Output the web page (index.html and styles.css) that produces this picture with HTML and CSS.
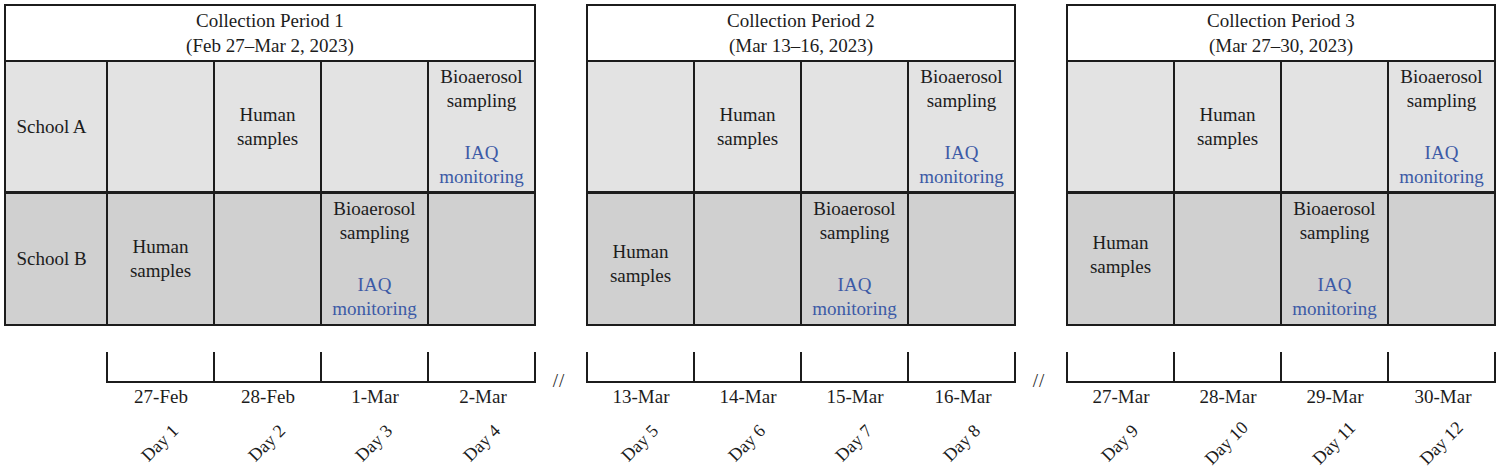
FILE: index.html
```html
<!DOCTYPE html>
<html lang="en">
<head>
<meta charset="utf-8">
<title>Sampling schedule</title>
<link rel="stylesheet" href="styles.css">
</head>
<body>
<div class="chart">
  <div class="tables">
    <div class="period p1">
      <div class="head">Collection Period 1<br>(Feb 27–Mar 2, 2023)</div>
      <div class="cell a label">School A</div>
      <div class="cell a"></div>
      <div class="cell a"><span>Human<br>samples</span></div>
      <div class="cell a"></div>
      <div class="cell a"><span>Bioaerosol<br>sampling</span><span class="iaq">IAQ<br>monitoring</span></div>
      <div class="cell b label">School B</div>
      <div class="cell b"><span>Human<br>samples</span></div>
      <div class="cell b"></div>
      <div class="cell b"><span>Bioaerosol<br>sampling</span><span class="iaq">IAQ<br>monitoring</span></div>
      <div class="cell b"></div>
    </div>
    <div class="period p2">
      <div class="head">Collection Period 2<br>(Mar 13–16, 2023)</div>
      <div class="cell a"></div>
      <div class="cell a"><span>Human<br>samples</span></div>
      <div class="cell a"></div>
      <div class="cell a"><span>Bioaerosol<br>sampling</span><span class="iaq">IAQ<br>monitoring</span></div>
      <div class="cell b low"><span>Human<br>samples</span></div>
      <div class="cell b"></div>
      <div class="cell b"><span>Bioaerosol<br>sampling</span><span class="iaq">IAQ<br>monitoring</span></div>
      <div class="cell b"></div>
    </div>
    <div class="period p3">
      <div class="head">Collection Period 3<br>(Mar 27–30, 2023)</div>
      <div class="cell a"></div>
      <div class="cell a"><span>Human<br>samples</span></div>
      <div class="cell a"></div>
      <div class="cell a"><span>Bioaerosol<br>sampling</span><span class="iaq">IAQ<br>monitoring</span></div>
      <div class="cell b high"><span>Human<br>samples</span></div>
      <div class="cell b"></div>
      <div class="cell b"><span>Bioaerosol<br>sampling</span><span class="iaq">IAQ<br>monitoring</span></div>
      <div class="cell b"></div>
    </div>
  </div>

  <div class="timeline">
    <div class="lead"></div>
    <div class="axis">
      <div class="day"><div class="tick"></div><div class="date">27-Feb</div><div class="dname"><span>Day 1</span></div></div>
      <div class="day"><div class="tick"></div><div class="date">28-Feb</div><div class="dname"><span>Day 2</span></div></div>
      <div class="day"><div class="tick"></div><div class="date">1-Mar</div><div class="dname"><span>Day 3</span></div></div>
      <div class="day last"><div class="tick"></div><div class="date">2-Mar</div><div class="dname"><span>Day 4</span></div></div>
    </div>
    <div class="sep"><span>//</span></div>
    <div class="axis">
      <div class="day"><div class="tick"></div><div class="date">13-Mar</div><div class="dname"><span>Day 5</span></div></div>
      <div class="day"><div class="tick"></div><div class="date">14-Mar</div><div class="dname"><span>Day 6</span></div></div>
      <div class="day"><div class="tick"></div><div class="date">15-Mar</div><div class="dname"><span>Day 7</span></div></div>
      <div class="day last"><div class="tick"></div><div class="date">16-Mar</div><div class="dname"><span>Day 8</span></div></div>
    </div>
    <div class="sep"><span>//</span></div>
    <div class="axis">
      <div class="day"><div class="tick"></div><div class="date">27-Mar</div><div class="dname"><span>Day 9</span></div></div>
      <div class="day"><div class="tick"></div><div class="date">28-Mar</div><div class="dname"><span>Day 10</span></div></div>
      <div class="day"><div class="tick"></div><div class="date">29-Mar</div><div class="dname"><span>Day 11</span></div></div>
      <div class="day last"><div class="tick"></div><div class="date">30-Mar</div><div class="dname"><span>Day 12</span></div></div>
    </div>
  </div>
</div>
</body>
</html>
```

FILE: styles.css
```css
* { box-sizing: border-box; }

html, body {
  margin: 0;
  padding: 0;
  background: #ffffff;
  overflow: hidden;
}

body {
  font-family: "Liberation Serif", "Times New Roman", serif;
  font-size: 19px;
  color: #1c1c1c;
}

.chart {
  padding: 4px 0 0 4px;
  width: 1500px;
}

.tables {
  display: flex;
  gap: 50px;
}

.period {
  display: grid;
  gap: 2px;
  padding: 2px;
  background: #1c1c1c;
  grid-template-rows: 54px 129px 131px;
}

.p1 { grid-template-columns: 100px repeat(4, 105px); }
.p2, .p3 { grid-template-columns: repeat(4, 105px); }

.head {
  grid-column: 1 / -1;
  background: #ffffff;
  text-align: center;
  line-height: 25px;
  padding-top: 2px;
}

.cell {
  display: flex;
  flex-direction: column;
  align-items: center;
  justify-content: center;
  text-align: center;
  line-height: 24px;
}

.cell.a { background: #e3e3e3; }
.cell.b { background: #d0d0d0; border-top: 1px solid #1c1c1c; }

.cell.label { padding-right: 9px; }

.cell.low { padding-top: 10px; }
.cell.high { padding-bottom: 8px; }

.iaq {
  color: #3c5aa6;
  margin-top: 28px;
}

.timeline {
  display: flex;
  margin-top: 26px;
}

.lead { width: 102px; }

.axis { display: flex; }

.day { width: 107px; }
.day.last { width: 109px; }

.tick {
  height: 31px;
  border-left: 2px solid #1c1c1c;
  border-bottom: 2px solid #1c1c1c;
}

.day.last .tick { border-right: 2px solid #1c1c1c; }

.date {
  text-align: center;
  line-height: 24px;
  margin-top: 2px;
  padding-left: 3px;
}

.dname {
  height: 60px;
  display: flex;
  justify-content: center;
  padding-top: 10px;
  font-size: 18px;
}

.dname span {
  display: block;
  transform: rotate(-45deg);
  transform-origin: center center;
  margin-top: 14px;
  white-space: nowrap;
  line-height: 20px;
  height: 20px;
}

.sep {
  width: 50px;
  height: 40px;
  display: flex;
  justify-content: center;
  align-items: flex-end;
  font-size: 19px;
  letter-spacing: 1px;
  padding-right: 4px;
}
```
